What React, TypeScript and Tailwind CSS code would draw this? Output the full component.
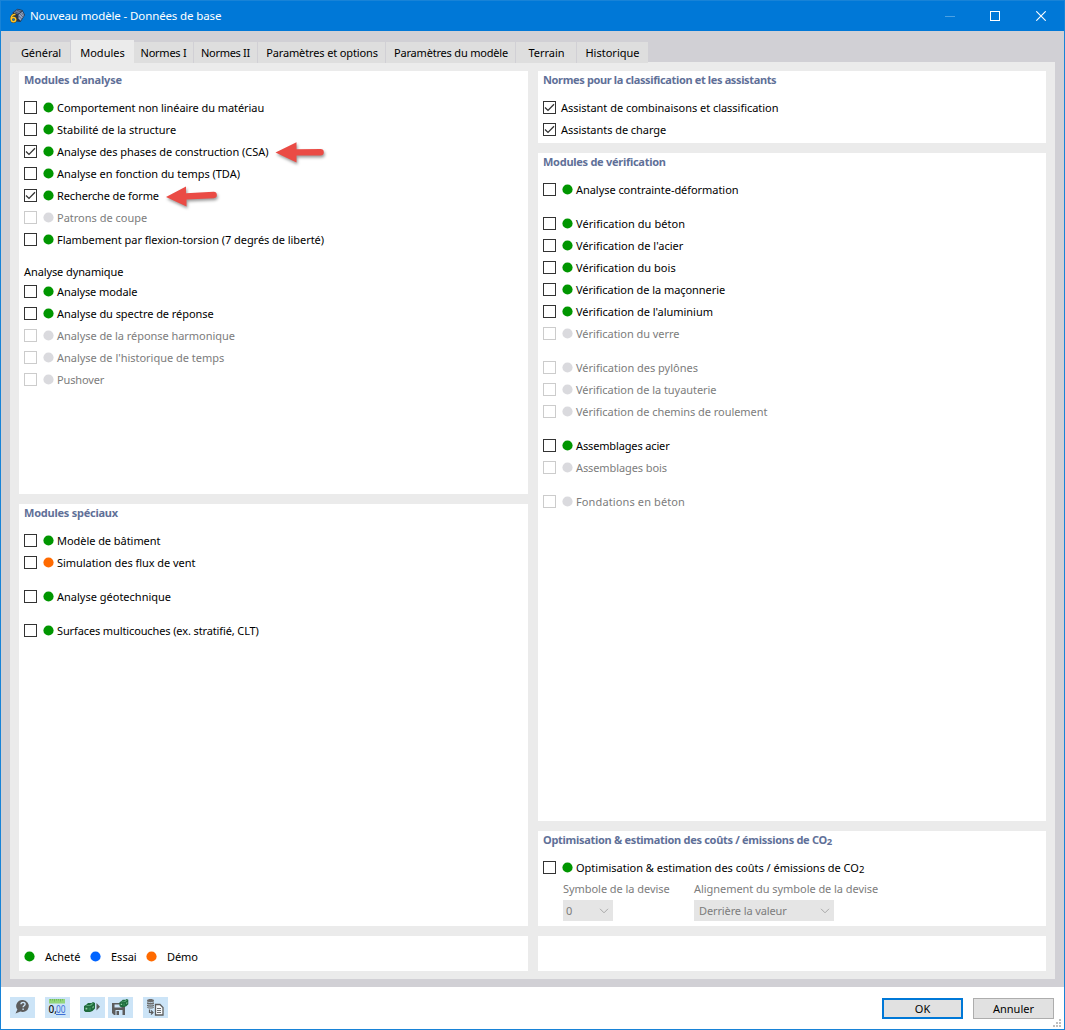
import { useState } from 'react';
import type { ReactNode } from 'react';

type Status = 'bought' | 'trial' | 'demo' | 'off';

type ModuleItem = {
  label: ReactNode;
  status?: Status;
  checked?: boolean;
  gap?: boolean;
  arrow?: 'csa' | 'form';
  tracking?: string;
};

const tabs = [
  { label: 'Général', width: 'w-[61px] pl-[2px]', tracking: 'tracking-[-0.05px]' },
  { label: 'Modules', width: 'w-[63px]', tracking: 'tracking-[0px]' },
  { label: 'Normes I', width: 'w-[60px]', tracking: 'tracking-[-0.25px]' },
  { label: 'Normes II', width: 'w-[64px]', tracking: 'tracking-[-0.3px]' },
  { label: 'Paramètres et options', width: 'w-[128px] pl-px', tracking: 'tracking-[-0.13px]' },
  { label: 'Paramètres du modèle', width: 'w-[130px] pl-px', tracking: 'tracking-[-0.19px]' },
  { label: 'Terrain', width: 'w-[61px] pl-px', tracking: 'tracking-[0px]' },
  { label: 'Historique', width: 'w-[71px]', tracking: 'tracking-[0px]' },
];

const analysisModules: ModuleItem[] = [
  { label: 'Comportement non linéaire du matériau', status: 'bought', tracking: 'tracking-[-0.07px]' },
  { label: 'Stabilité de la structure', status: 'bought', tracking: 'tracking-[-0.01px]' },
  { label: 'Analyse des phases de construction (CSA)', status: 'bought', checked: true, arrow: 'csa' },
  { label: 'Analyse en fonction du temps (TDA)', status: 'bought', tracking: 'tracking-[-0.02px]' },
  { label: 'Recherche de forme', status: 'bought', checked: true, arrow: 'form', tracking: 'tracking-[-0.12px]' },
  { label: 'Patrons de coupe', status: 'off', tracking: 'tracking-[0px]' },
  { label: 'Flambement par flexion-torsion (7 degrés de liberté)', status: 'bought' },
];

const dynamicModules: ModuleItem[] = [
  { label: 'Analyse modale', status: 'bought', tracking: 'tracking-[-0.1px]' },
  { label: 'Analyse du spectre de réponse', status: 'bought' },
  { label: 'Analyse de la réponse harmonique', status: 'off' },
  { label: "Analyse de l'historique de temps", status: 'off', tracking: 'tracking-[-0.02px]' },
  { label: 'Pushover', status: 'off', tracking: 'tracking-[-0.15px]' },
];

const specialModules: ModuleItem[] = [
  { label: 'Modèle de bâtiment', status: 'bought' },
  { label: 'Simulation des flux de vent', status: 'demo' },
  { label: 'Analyse géotechnique', status: 'bought', gap: true, tracking: 'tracking-[0px]' },
  { label: 'Surfaces multicouches (ex. stratifié, CLT)', status: 'bought', gap: true, tracking: 'tracking-[-0.12px]' },
];

const assistants: ModuleItem[] = [
  { label: 'Assistant de combinaisons et classification', checked: true, tracking: 'tracking-[-0.03px]' },
  { label: 'Assistants de charge', checked: true },
];

const designModules: ModuleItem[] = [
  { label: 'Analyse contrainte-déformation', status: 'bought' },
  { label: 'Vérification du béton', status: 'bought', gap: true, tracking: 'tracking-[0.05px]' },
  { label: "Vérification de l'acier", status: 'bought', tracking: 'tracking-[0.02px]' },
  { label: 'Vérification du bois', status: 'bought', tracking: 'tracking-[0.03px]' },
  { label: 'Vérification de la maçonnerie', status: 'bought' },
  { label: "Vérification de l'aluminium", status: 'bought', tracking: 'tracking-[-0.02px]' },
  { label: 'Vérification du verre', status: 'off' },
  { label: 'Vérification des pylônes', status: 'off', gap: true, tracking: 'tracking-[-0.01px]' },
  { label: 'Vérification de la tuyauterie', status: 'off' },
  { label: 'Vérification de chemins de roulement', status: 'off' },
  { label: 'Assemblages acier', status: 'bought', gap: true, tracking: 'tracking-[-0.14px]' },
  { label: 'Assemblages bois', status: 'off', tracking: 'tracking-[-0.1px]' },
  { label: 'Fondations en béton', status: 'off', gap: true, tracking: 'tracking-[0.12px]' },
];

const statusColors: Record<Status, string> = {
  bought: 'fill-[#009600]',
  trial: 'fill-[#0064ff]',
  demo: 'fill-[#ff6a00]',
  off: 'fill-[#dadade]',
};

function Dot({ status }: { status: Status }) {
  return (
    <svg width="11" height="11" viewBox="0 0 11 11" className={`shrink-0 ${statusColors[status]}`}>
      <circle cx="5.5" cy="5.5" r="5.1" />
    </svg>
  );
}

function Arrow({ kind }: { kind: 'csa' | 'form' }) {
  return (
    <svg
      width="56"
      height="30"
      viewBox="0 0 56 30"
      className={`-mb-2 -mt-1 shrink-0 drop-shadow-[1px_2px_1.5px_rgba(0,0,0,0.4)] ${
        kind === 'csa' ? 'ml-[6px]' : 'ml-[5px]'
      }`}
    >
      {kind === 'csa' ? (
        <path d="M1.500 14.500 22.500 4.300V11.300L46.500 11a3.200 3.200 0 0 1 0 6.600L22.500 17.600V24.500Z" fill="#ea4b45" />
      ) : (
        <path d="M2 14.900 22 4.500V11.200L49.500 9.800a3.200 3.200 0 0 1 .3 6.400L22.500 17.600V24.500Z" fill="#ea4b45" />
      )}
    </svg>
  );
}

function Module({ item }: { item: ModuleItem }) {
  const [checked, setChecked] = useState(!!item.checked);
  const off = item.status === 'off';

  return (
    <div className={`flex h-[22px] items-center ${item.gap ? 'mt-3' : ''}`}>
      <button
        onClick={() => !off && setChecked(!checked)}
        className={`flex size-[13px] shrink-0 items-center justify-center border bg-white ${
          off ? 'border-[#cccccc]' : 'border-[#333333]'
        }`}
      >
        {checked && (
          <svg width="11" height="11" viewBox="0 0 11 11" fill="none" stroke="#333" strokeWidth="1.3">
            <path d="M1 5.500 4 8.400 10 2.200" />
          </svg>
        )}
      </button>
      {item.status && (
        <span className="ml-[6px] flex pt-px">
          <Dot status={item.status} />
        </span>
      )}
      <span
        className={`whitespace-nowrap pt-px ${item.status ? 'ml-[3px]' : 'ml-[5px]'} ${
          item.tracking ?? 'tracking-[-0.05px]'
        } ${off ? 'text-[#7c7c7c]' : 'text-black'}`}
      >
        {item.label}
      </span>
      {item.arrow && <Arrow kind={item.arrow} />}
    </div>
  );
}

function ModuleList({ items }: { items: ModuleItem[] }) {
  return (
    <>
      {items.map((item, index) => (
        <Module key={index} item={item} />
      ))}
    </>
  );
}

function Panel({
  title,
  tracking = 'tracking-[-0.36px]',
  className,
  children,
}: {
  title: ReactNode;
  tracking?: string;
  className: string;
  children: ReactNode;
}) {
  return (
    <section className={`bg-white pl-[5px] ${className}`}>
      <h2 className={`h-[25px] whitespace-nowrap font-bold leading-[17px] text-[#5f7098] ${tracking}`}>{title}</h2>
      {children}
    </section>
  );
}

function Co2Label() {
  return (
    <>
      Optimisation & estimation des coûts / émissions de CO
      <span className="relative top-px text-[9.5px] leading-none">2</span>
    </>
  );
}

function Select({ value, className }: { value: string; className: string }) {
  return (
    <div className={`flex h-[21px] items-center justify-between bg-[#e5e5e5] pr-1 text-[#7c7c7c] ${className}`}>
      <span className="pt-px tracking-[-0.12px]">{value}</span>
      <svg width="10" height="6" viewBox="0 0 10 6" fill="none" stroke="#a8a8a8">
        <path d="M1 .8 5 4.800 9 .8" />
      </svg>
    </div>
  );
}

function AppLogo() {
  return (
    <svg width="16" height="16" viewBox="0 0 16 16">
      <path d="M3.500 4.500 8.500.8l5 1.200L16 7l-4.500 7-4-.5Z" fill="#27354c" />
      <path d="m4.500 4.500 4-2.900 4.500 1.200-4 3.400Z" fill="#6f82a3" />
      <path d="m9.500 6.800 4-3.300 1.800 3.700-3.800 5.600-2-2.300Z" fill="#93a5c4" />
      <path
        d="m6 3.800 4 2M8 2.200l4 1.800M9.800 8l3 3.200M11.200 6l2.800 3.200M12.600 4.800l2.400 3"
        stroke="#1d2940"
        strokeWidth=".5"
      />
      <g fill="none">
        <path d="M6.500 6.600C3 6 2 9 2.200 11.500" stroke="#4a3a14" strokeWidth="2.400" />
        <circle cx="4.500" cy="11.600" r="2.300" stroke="#4a3a14" strokeWidth="2.200" />
        <path d="M6.500 6.600C3 6 2 9 2.200 11.500" stroke="#ffc629" strokeWidth="1.500" />
        <circle cx="4.500" cy="11.600" r="2.200" stroke="#ffc629" strokeWidth="1.500" />
      </g>
    </svg>
  );
}

function GreenBlock() {
  return (
    <>
      <path d="M0 4 2.500 2.500 4 1h3.500L9 0l2 1v5.500L8.500 9 6 10H1.500L0 8.800Z" fill="#1f6b3d" />
      <path d="m1.500 4 1.800-1h2.500L8 1.200l1.500.3L7 3.800Z" fill="#5fae7a" />
      <path d="M1.500 5.800h1.800v1.800H1.500zM8.500 4.700l1.200-1v1.800L8.500 6.600z" fill="#8fd0a2" />
      <path d="M4.500 5.500h2.500v3H4.500z" fill="#2f8450" />
    </>
  );
}

function ToolButton({ className = '', children }: { className?: string; children: ReactNode }) {
  return (
    <button className={`h-[21px] w-[25px] bg-[#cce4f7] ${className}`}>
      <svg width="25" height="21" viewBox="0 0 25 21">
        {children}
      </svg>
    </button>
  );
}

function Toolbar() {
  return (
    <div className="flex">
      <ToolButton>
        <path d="M13 3a6.200 6 0 1 1-2.600 11.600L5.500 16.500l1.900-4A6.200 6 0 0 1 13 3Z" fill="#5c5c5c" />
        <path
          d="M11 7.300c0-2.600 4.200-2.400 4.100-.1 0 1.500-2 1.600-2 3m0 1.200v1.500"
          fill="none"
          stroke="#cce4f7"
          strokeWidth="1.400"
        />
      </ToolButton>
      <ToolButton className="ml-[10px]">
        <path d="M4 2h16v4.500H4z" fill="#93d67b" />
        <path
          d="M5.500 2v1.500M7.500 2v1.500M9.500 2v2.500M11.500 2v1.500M13.500 2v1.500M15.500 2v2.500M17.500 2v1.500"
          stroke="#5ba84a"
          strokeWidth=".6"
        />
        <text x="3.500" y="15.700" fontSize="10" fontWeight="500" fontFamily="Noto Sans, sans-serif" fill="#111">
          0,
        </text>
        <text
          x="11"
          y="15.700"
          fontSize="10"
          fontFamily="Noto Sans, sans-serif"
          textLength="9.500"
          lengthAdjust="spacingAndGlyphs"
          fill="#3c6fd6"
        >
          00
        </text>
        <path d="M11 17.500h9.500" stroke="#3c6fd6" />
      </ToolButton>
      <ToolButton className="ml-[10px]">
        <g transform="translate(4 5)">
          <GreenBlock />
        </g>
        <path d="m16.500 6 3.500 3.800-3.500 3.700Z" fill="#5c5c5c" />
      </ToolButton>
      <ToolButton className="ml-[3px]">
        <path d="M4 6h11.500v1.500L17 9v9H6l-2-2Z" fill="#5c5c5c" />
        <path d="M6.500 7.500h7v3h-7zM7.500 13h7v5h-7z" fill="#cce4f7" />
        <path d="M8.500 14h2.500v4H8.500z" fill="#5c5c5c" />
        <g transform="translate(11.500 2) scale(.8)">
          <GreenBlock />
        </g>
      </ToolButton>
      <ToolButton className="ml-[10px]">
        <path d="M4 3.500C4 1.500 11 1.500 11 3.500V10C11 12 4 12 4 10Z" fill="#6b6b6b" />
        <path d="M4 4.800c1 1 6 1 7 0M4 7.200c1 1 6 1 7 0M4 9.400c1 1 6 1 7 0" fill="none" stroke="#cce4f7" strokeWidth=".8" />
        <path d="M6.500 12.500v3h3.500m-2-2 2 2-2 2" fill="none" stroke="#5c5c5c" strokeWidth="1.200" />
        <path d="M12.500 7.500h4.500l3 3v7.500h-7.500Z" fill="#f5f9fd" stroke="#5c5c5c" strokeWidth="1.300" />
        <path d="M14 11.500h4M14 13.500h4M14 15.500h4" stroke="#5c5c5c" strokeWidth=".9" />
      </ToolButton>
    </div>
  );
}

function TitleBar() {
  return (
    <header className="-mx-px -mt-px flex h-[31px] items-center border-x border-t border-[#1883d7] bg-[#0078d7] pl-2 text-white">
      <AppLogo />
      <h1 className="ml-[5px] whitespace-nowrap text-[11.5px] tracking-[-0.12px]">Nouveau modèle - Données de base</h1>
      <div className="ml-auto flex h-full items-center pr-[18px]">
        <button className="h-px w-[10px] bg-[#4ca1e3]" />
        <button className="ml-[35px] size-[10px] border border-white" />
        <button className="ml-9">
          <svg width="10" height="10" viewBox="0 0 10 10" stroke="white" strokeWidth="1.100">
            <path d="m.3.3 9.400 9.400M9.700.3.3 9.700" />
          </svg>
        </button>
      </div>
    </header>
  );
}

export default function App() {
  const [activeTab, setActiveTab] = useState('Modules');

  return (
    <div className="flex h-[1030px] w-[1065px] flex-col overflow-hidden border border-[#1883d7] bg-white font-['Noto_Sans',sans-serif] text-[11px] leading-4 text-black">
      <TitleBar />

      <div className="flex h-[956px] flex-col bg-[#d1d0d5] px-[9px] pb-2 pt-[9px]">
        {/* Tabs */}
        <nav className="relative z-10 flex h-[23px] items-end">
          {tabs.map((tab) => {
            const active = tab.label === activeTab;
            return (
              <button
                key={tab.label}
                onClick={() => setActiveTab(tab.label)}
                className={`whitespace-nowrap text-center ${tab.width} ${tab.tracking} ${
                  active
                    ? 'h-[23px] bg-[#ebebeb] pt-[3px]'
                    : 'h-[21px] border-r border-[#d1d0d5] bg-[#dedede] pt-px last:border-r-0'
                }`}
              >
                {tab.label}
              </button>
            );
          })}
        </nav>

        <main className="-mt-px grid h-[917px] grid-cols-[509px_508px] gap-x-[10px] bg-[#ebebeb] pl-[9px] pt-[9px]">
          <div className="flex flex-col gap-[10px]">
            <Panel title="Modules d'analyse" tracking="tracking-[-0.18px]" className="h-[423px]">
              <ModuleList items={analysisModules} />
              <h3 className="mt-3 h-[18px] leading-[20px] tracking-[-0.1px]">Analyse dynamique</h3>
              <ModuleList items={dynamicModules} />
            </Panel>
            <Panel title="Modules spéciaux" tracking="tracking-[-0.24px]" className="h-[422px]">
              <ModuleList items={specialModules} />
            </Panel>
            <div className="flex h-[35px] items-center bg-white pl-[5px] pt-[6px]">
              <Dot status="bought" />
              <span className="ml-[10px] w-[45px]">Acheté</span>
              <Dot status="trial" />
              <span className="ml-[10px] w-[35px]">Essai</span>
              <Dot status="demo" />
              <span className="ml-[10px] tracking-[-0.1px]">Démo</span>
            </div>
          </div>

          <div className="flex flex-col gap-[10px]">
            <Panel title="Normes pour la classification et les assistants" className="h-[72px]">
              <ModuleList items={assistants} />
            </Panel>
            <Panel title="Modules de vérification" tracking="tracking-[-0.27px]" className="h-[668px]">
              <ModuleList items={designModules} />
            </Panel>
            <Panel title={<Co2Label />} tracking="tracking-[-0.3px]" className="h-[95px]">
              <Module item={{ label: <Co2Label />, status: 'bought', tracking: 'tracking-[0px]' }} />
              <div className="flex pl-5 text-[#7c7c7c]">
                <div className="w-[131px]">
                  <p className="h-[22px] leading-[21px] tracking-[-0.05px]">Symbole de la devise</p>
                  <Select value="0" className="w-[50px] pl-[3px]" />
                </div>
                <div>
                  <p className="h-[22px] leading-[21px] tracking-[-0.05px]">Alignement du symbole de la devise</p>
                  <Select value="Derrière la valeur" className="w-[140px] pl-[5px]" />
                </div>
              </div>
            </Panel>
            <div className="h-[35px] bg-white" />
          </div>
        </main>
      </div>

      <footer className="relative flex h-[42px] justify-between pl-[9px] pr-[10px] pt-[10px]">
        <Toolbar />
        <div className="flex gap-[10px] pt-px">
          <button className="h-[21px] w-[81px] border-2 border-[#0078d7] bg-[#e1e1e1]">OK</button>
          <button className="h-[21px] w-[81px] border border-[#adadad] bg-[#e1e1e1]">Annuler</button>
        </div>
        <svg width="8" height="8" viewBox="0 0 8 8" fill="#bfbfbf" className="absolute bottom-[2px] right-[3px]">
          <path d="M6 0h2v2H6zM3 3h2v2H3zM6 3h2v2H6zM0 6h2v2H0zM3 6h2v2H3zM6 6h2v2H6z" />
        </svg>
      </footer>
    </div>
  );
}
